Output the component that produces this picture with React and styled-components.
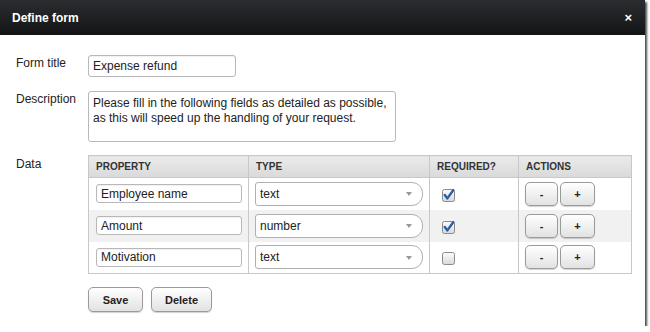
import React from 'react'
import styled, { createGlobalStyle } from 'styled-components'

const GlobalStyle = createGlobalStyle`
  html, body {
    margin: 0;
    background: #fff;
    font-family: "Liberation Sans", Arial, sans-serif;
  }
`

const Dialog = styled.div`
  width: 645px;
  height: 326px;
  background: #fff;
  box-shadow: 2px 2px 2px rgba(0, 0, 0, 0.7);
  display: flex;
  flex-direction: column;
`

const Header = styled.div`
  height: 35px;
  flex: none;
  display: flex;
  align-items: center;
  justify-content: space-between;
  padding: 0 13px 0 12px;
  background: linear-gradient(#2c2d30, #131416);
  color: #fff;
`

const Title = styled.h1`
  margin: 0;
  font-size: 12px;
  font-weight: bold;
`

const Close = styled.span`
  font-size: 13px;
  font-weight: bold;
  line-height: 1;
`

const Body = styled.div`
  padding: 20px 16px 0 16px;
  display: grid;
  grid-template-columns: 72px 1fr;
  row-gap: 14px;
  align-items: start;
`

const Label = styled.label`
  font-size: 12px;
  line-height: 16px;
  color: #222;
`

const TextInput = styled.input`
  box-sizing: border-box;
  width: ${p => p.$w || 148}px;
  height: ${p => p.$h || 22}px;
  border: 1px solid #b8b8b8;
  border-radius: 3px;
  padding: 0 4px;
  font-family: inherit;
  font-size: 12px;
  color: #222;
  background: #fff;
  box-shadow: inset 0 1px 1px rgba(0, 0, 0, 0.06);
  outline: none;
  display: block;
`

const TextArea = styled.textarea`
  box-sizing: border-box;
  width: 308px;
  height: 51px;
  border: 1px solid #b8b8b8;
  border-radius: 3px;
  padding: 4px 4px;
  font-family: inherit;
  font-size: 12px;
  line-height: 15px;
  color: #222;
  resize: none;
  outline: none;
  display: block;
  overflow: hidden;
`

const Table = styled.table`
  border-collapse: collapse;
  width: 543px;
  table-layout: fixed;
  margin: -1px 0 -1px 0;
`

const Th = styled.th`
  box-sizing: border-box;
  width: ${p => p.$w}px;
  height: 22px;
  padding: 0 7px;
  text-align: left;
  font-size: 10px;
  font-weight: bold;
  color: #333;
  background: linear-gradient(#ebebeb, #d9d9d9);
  border: 1px solid #c8c8c8;
`

const Row = styled.tr`
  background: ${p => (p.$shade ? '#f1f1f1' : '#fff')};
`

const Td = styled.td`
  height: 32px;
  box-sizing: border-box;
  padding: 0 0 0 ${p => p.$pl || 6}px;
  border-left: 1px solid #c8c8c8;
  border-right: 1px solid #c8c8c8;
  vertical-align: middle;
  ${p => p.$last && 'border-bottom: 1px solid #c8c8c8;'}
`

const SelectBox = styled.div`
  box-sizing: border-box;
  width: 168px;
  height: 24px;
  border: 1px solid #b0b0b0;
  border-radius: 3px 11px 11px 3px;
  background: #fff;
  display: flex;
  align-items: center;
  justify-content: space-between;
  padding: 0 10px 0 4px;
  font-size: 12px;
  color: #222;
`

const Caret = styled.span`
  width: 0;
  height: 0;
  border-left: 3.5px solid transparent;
  border-right: 3.5px solid transparent;
  border-top: 4px solid #999;
  margin-top: 1px;
`

const Check = styled.span`
  display: block;
  width: 13px;
  height: 13px;
  margin-left: 6px;
  margin-top: 1px;
`

const Actions = styled.div`
  display: flex;
  gap: 2px;
`

const Button = styled.button`
  box-sizing: border-box;
  height: ${p => p.$h || 24}px;
  min-width: ${p => p.$w || 32}px;
  padding: 0 ${p => p.$px || 0}px;
  border: 1px solid #9a9a9a;
  border-radius: 5px;
  background: linear-gradient(#ffffff, #e2e2e2);
  box-shadow: 0 1px 1px rgba(0, 0, 0, 0.18);
  font-family: inherit;
  font-size: 11px;
  font-weight: bold;
  color: #222;
  cursor: pointer;
`

const Footer = styled.div`
  grid-column: 2;
  display: flex;
  gap: 8px;
`

const CheckIcon = ({ checked }) => (
  <Check>
    <svg width="13" height="13" viewBox="0 0 13 13">
      <defs>
        <linearGradient id="cbg" x1="0" y1="0" x2="0" y2="1">
          <stop offset="0" stopColor="#fdfdfd" />
          <stop offset="1" stopColor="#d8d8d8" />
        </linearGradient>
      </defs>
      <rect x="0.5" y="0.5" width="12" height="12" rx="2" fill="url(#cbg)" stroke="#8a8a8a" />
      {checked && (
        <path d="M2.8 6 L5.4 9.4 L11.2 1.2" fill="none" stroke="#2b5fae" strokeWidth="2.4" strokeLinecap="round" strokeLinejoin="round" />
      )}
    </svg>
  </Check>
)

const fields = [
  { name: 'Employee name', type: 'text', required: true },
  { name: 'Amount', type: 'number', required: true },
  { name: 'Motivation', type: 'text', required: false },
]

export default function App() {
  return (
    <>
      <GlobalStyle />
      <Dialog>
        <Header>
          <Title>Define form</Title>
          <Close>×</Close>
        </Header>
        <Body>
          <Label>Form title</Label>
          <TextInput defaultValue="Expense refund" />

          <Label>Description</Label>
          <TextArea defaultValue={'Please fill in the following fields as detailed as possible,\nas this will speed up the handling of your request.'} />

          <Label>Data</Label>
          <Table>
            <thead>
              <tr>
                <Th $w={160}>PROPERTY</Th>
                <Th $w={181}>TYPE</Th>
                <Th $w={89}>REQUIRED?</Th>
                <Th $w={113}>ACTIONS</Th>
              </tr>
            </thead>
            <tbody>
              {fields.map((f, i) => {
                const last = i === fields.length - 1
                return (
                  <Row key={f.name} $shade={i === 1}>
                    <Td $pl={7} $last={last}>
                      <TextInput $w={146} $h={19} defaultValue={f.name} />
                    </Td>
                    <Td $pl={6} $last={last}>
                      <SelectBox>
                        {f.type}
                        <Caret />
                      </SelectBox>
                    </Td>
                    <Td $pl={6} $last={last}>
                      <CheckIcon checked={f.required} />
                    </Td>
                    <Td $pl={6} $last={last}>
                      <Actions>
                        <Button $w={33}>-</Button>
                        <Button $w={35}>+</Button>
                      </Actions>
                    </Td>
                  </Row>
                )
              })}
            </tbody>
          </Table>

          <Footer>
            <Button $h={25} $w={55}>Save</Button>
            <Button $h={25} $w={61}>Delete</Button>
          </Footer>
        </Body>
      </Dialog>
    </>
  )
}
